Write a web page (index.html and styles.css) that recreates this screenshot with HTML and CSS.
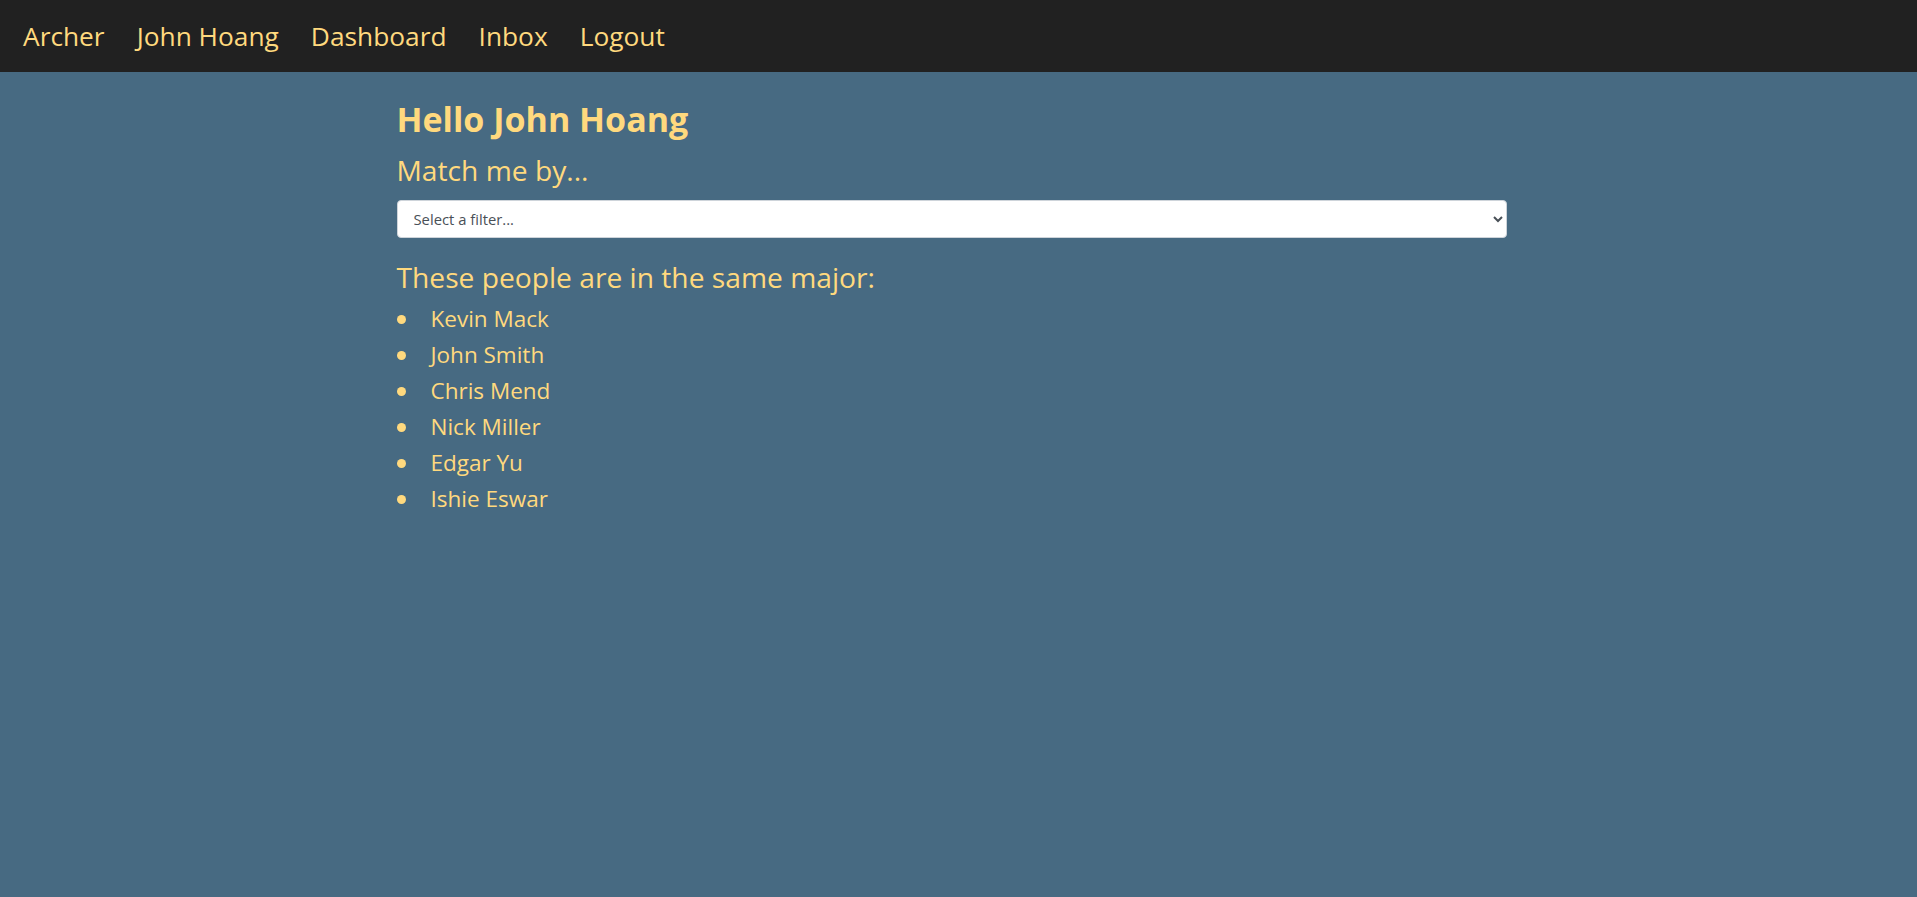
FILE: index.html
```html
<!DOCTYPE html>
<html lang="en">
<head>
<meta charset="utf-8">
<title>Archer</title>
<link rel="stylesheet" href="styles.css">
</head>
<body>
<nav class="navbar">
  <a class="nav-link" href="#">Archer</a>
  <a class="nav-link" href="#">John Hoang</a>
  <a class="nav-link" href="#">Dashboard</a>
  <a class="nav-link" href="#">Inbox</a>
  <a class="nav-link" href="#">Logout</a>
</nav>
<main class="container">
  <h1 class="greeting">Hello John Hoang</h1>
  <h2 class="subtitle">Match me by...</h2>
  <select class="filter">
    <option>Select a filter...</option>
    <option>Major</option>
    <option>Classes</option>
    <option>Interests</option>
  </select>
  <h2 class="subtitle results-title">These people are in the same major:</h2>
  <ul class="people">
    <li>Kevin Mack</li>
    <li>John Smith</li>
    <li>Chris Mend</li>
    <li>Nick Miller</li>
    <li>Edgar Yu</li>
    <li>Ishie Eswar</li>
  </ul>
</main>
</body>
</html>
```
FILE: styles.css
```css
html, body {
  margin: 0;
  padding: 0;
}

body {
  background: #476a82;
  color: #ffd97e;
  font-family: "Open Sans", "Noto Sans", sans-serif;
  min-height: 100vh;
}

.navbar {
  box-sizing: border-box;
  height: 72px;
  background: #212121;
  display: flex;
  align-items: flex-start;
  gap: 32px;
  padding: 18px 0 0 23px;
}

.nav-link {
  color: #ffd97e;
  text-decoration: none;
  font-size: 26.3px;
  line-height: 36px;
}

.container {
  width: 1110px;
  margin-left: calc(50% - 562px);
  padding-top: 27px;
}

.greeting {
  margin: 0;
  font-size: 34px;
  line-height: 40px;
  font-weight: 700;
}

.subtitle {
  margin: 13px 0 0;
  font-size: 28.2px;
  line-height: 36px;
  font-weight: 400;
}

.filter {
  display: block;
  box-sizing: border-box;
  width: 100%;
  height: 38px;
  margin-top: 12px;
  padding: 0 12px;
  background: #fff;
  border: 1px solid #ced4da;
  border-radius: 4px;
  color: #495057;
  font-family: "Open Sans", "Noto Sans", sans-serif;
  font-size: 14.8px;
}

.results-title {
  margin-top: 21px;
}

.people {
  list-style: none;
  margin: 6px 0 0;
  padding: 0;
}

.people li {
  display: flex;
  align-items: center;
  font-size: 22.5px;
  line-height: 36px;
}

.people li::before {
  content: "";
  width: 9px;
  height: 9px;
  border-radius: 50%;
  background: #ffd97e;
  margin-right: 25px;
  flex: none;
}
```
